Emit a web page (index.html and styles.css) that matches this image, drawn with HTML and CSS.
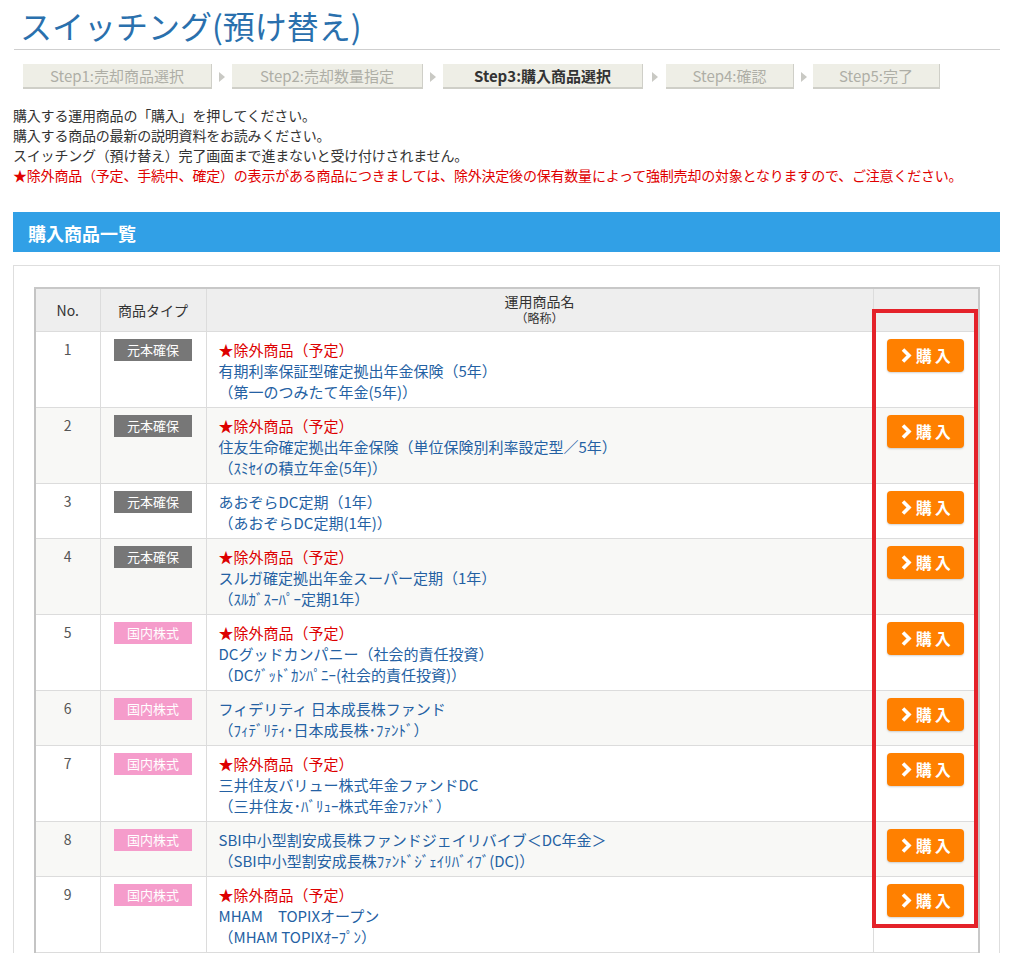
FILE: index.html
```html
<!DOCTYPE html>
<html lang="ja">
<head>
<meta charset="utf-8">
<title>スイッチング(預け替え)</title>
<link rel="stylesheet" href="styles.css">
</head>
<body>
<div class="page">
  <h1 class="title">スイッチング(預け替え)</h1>

  <ol class="steps">
    <li class="step s1">Step1:売却商品選択</li>
    <li class="sep"><svg width="6" height="10" viewBox="0 0 6 10"><path d="M0 0 L6 5 L0 10 Z" fill="#c9c9c4"/></svg></li>
    <li class="step s2">Step2:売却数量指定</li>
    <li class="sep"><svg width="6" height="10" viewBox="0 0 6 10"><path d="M0 0 L6 5 L0 10 Z" fill="#c9c9c4"/></svg></li>
    <li class="step s3 active">Step3:購入商品選択</li>
    <li class="sep"><svg width="6" height="10" viewBox="0 0 6 10"><path d="M0 0 L6 5 L0 10 Z" fill="#c9c9c4"/></svg></li>
    <li class="step s4">Step4:確認</li>
    <li class="sep"><svg width="6" height="10" viewBox="0 0 6 10"><path d="M0 0 L6 5 L0 10 Z" fill="#c9c9c4"/></svg></li>
    <li class="step s5">Step5:完了</li>
  </ol>

  <div class="notice">
    <p>購入する運用商品の「購入」を押してください。</p>
    <p>購入する商品の最新の説明資料をお読みください。</p>
    <p>スイッチング（預け替え）完了画面まで進まないと受け付けされません。</p>
    <p class="warn">★除外商品（予定、手続中、確定）の表示がある商品につきましては、除外決定後の保有数量によって強制売却の対象となりますので、ご注意ください。</p>
  </div>

  <h2 class="section-bar">購入商品一覧</h2>

  <div class="panel">
    <div class="table-wrap">
      <table class="products">
        <colgroup>
          <col class="c-no"><col class="c-type"><col class="c-name"><col class="c-btn">
        </colgroup>
        <thead>
          <tr>
            <th>No.</th>
            <th>商品タイプ</th>
            <th class="h-name"><span class="h1">運用商品名</span><span class="h2">（略称）</span></th>
            <th></th>
          </tr>
        </thead>
        <tbody>
          <tr>
            <td class="no">1</td>
            <td class="type"><span class="badge gray">元本確保</span></td>
            <td class="name"><span class="ex">★除外商品（予定）</span><br>有期利率保証型確定拠出年金保険（5年）<br>（第一のつみたて年金(5年)）</td>
            <td class="btn-cell"><a class="buy" href="#"><svg width="11" height="15" viewBox="0 0 11 15"><path d="M2 1.5 L8 7.5 L2 13.5" fill="none" stroke="#fff" stroke-width="3.6"/></svg><span>購入</span></a></td>
          </tr>
          <tr>
            <td class="no">2</td>
            <td class="type"><span class="badge gray">元本確保</span></td>
            <td class="name"><span class="ex">★除外商品（予定）</span><br>住友生命確定拠出年金保険（単位保険別利率設定型／5年）<br>（ｽﾐｾｲの積立年金(5年)）</td>
            <td class="btn-cell"><a class="buy" href="#"><svg width="11" height="15" viewBox="0 0 11 15"><path d="M2 1.5 L8 7.5 L2 13.5" fill="none" stroke="#fff" stroke-width="3.6"/></svg><span>購入</span></a></td>
          </tr>
          <tr>
            <td class="no">3</td>
            <td class="type"><span class="badge gray">元本確保</span></td>
            <td class="name">あおぞらDC定期（1年）<br>（あおぞらDC定期(1年)）</td>
            <td class="btn-cell"><a class="buy" href="#"><svg width="11" height="15" viewBox="0 0 11 15"><path d="M2 1.5 L8 7.5 L2 13.5" fill="none" stroke="#fff" stroke-width="3.6"/></svg><span>購入</span></a></td>
          </tr>
          <tr>
            <td class="no">4</td>
            <td class="type"><span class="badge gray">元本確保</span></td>
            <td class="name"><span class="ex">★除外商品（予定）</span><br>スルガ確定拠出年金スーパー定期（1年）<br>（ｽﾙｶﾞｽｰﾊﾟｰ定期1年）</td>
            <td class="btn-cell"><a class="buy" href="#"><svg width="11" height="15" viewBox="0 0 11 15"><path d="M2 1.5 L8 7.5 L2 13.5" fill="none" stroke="#fff" stroke-width="3.6"/></svg><span>購入</span></a></td>
          </tr>
          <tr>
            <td class="no">5</td>
            <td class="type"><span class="badge pink">国内株式</span></td>
            <td class="name"><span class="ex">★除外商品（予定）</span><br>DCグッドカンパニー（社会的責任投資）<br>（DCｸﾞｯﾄﾞｶﾝﾊﾟﾆｰ(社会的責任投資)）</td>
            <td class="btn-cell"><a class="buy" href="#"><svg width="11" height="15" viewBox="0 0 11 15"><path d="M2 1.5 L8 7.5 L2 13.5" fill="none" stroke="#fff" stroke-width="3.6"/></svg><span>購入</span></a></td>
          </tr>
          <tr>
            <td class="no">6</td>
            <td class="type"><span class="badge pink">国内株式</span></td>
            <td class="name">フィデリティ 日本成長株ファンド<br>（ﾌｨﾃﾞﾘﾃｨ･日本成長株･ﾌｧﾝﾄﾞ）</td>
            <td class="btn-cell"><a class="buy" href="#"><svg width="11" height="15" viewBox="0 0 11 15"><path d="M2 1.5 L8 7.5 L2 13.5" fill="none" stroke="#fff" stroke-width="3.6"/></svg><span>購入</span></a></td>
          </tr>
          <tr>
            <td class="no">7</td>
            <td class="type"><span class="badge pink">国内株式</span></td>
            <td class="name"><span class="ex">★除外商品（予定）</span><br>三井住友バリュー株式年金ファンドDC<br>（三井住友･ﾊﾞﾘｭｰ株式年金ﾌｧﾝﾄﾞ）</td>
            <td class="btn-cell"><a class="buy" href="#"><svg width="11" height="15" viewBox="0 0 11 15"><path d="M2 1.5 L8 7.5 L2 13.5" fill="none" stroke="#fff" stroke-width="3.6"/></svg><span>購入</span></a></td>
          </tr>
          <tr>
            <td class="no">8</td>
            <td class="type"><span class="badge pink">国内株式</span></td>
            <td class="name">SBI中小型割安成長株ファンドジェイリバイブ＜DC年金＞<br>（SBI中小型割安成長株ﾌｧﾝﾄﾞｼﾞｪｲﾘﾊﾞｲﾌﾞ(DC)）</td>
            <td class="btn-cell"><a class="buy" href="#"><svg width="11" height="15" viewBox="0 0 11 15"><path d="M2 1.5 L8 7.5 L2 13.5" fill="none" stroke="#fff" stroke-width="3.6"/></svg><span>購入</span></a></td>
          </tr>
          <tr>
            <td class="no">9</td>
            <td class="type"><span class="badge pink">国内株式</span></td>
            <td class="name"><span class="ex">★除外商品（予定）</span><br>MHAM　TOPIXオープン<br>（MHAM TOPIXｵｰﾌﾟﾝ）</td>
            <td class="btn-cell"><a class="buy" href="#"><svg width="11" height="15" viewBox="0 0 11 15"><path d="M2 1.5 L8 7.5 L2 13.5" fill="none" stroke="#fff" stroke-width="3.6"/></svg><span>購入</span></a></td>
          </tr>
        </tbody>
      </table>
      <div class="highlight"></div>
    </div>
  </div>
</div>
</body>
</html>
```

FILE: styles.css
```css
html, body {
  margin: 0;
  padding: 0;
  overflow: hidden;
  background: #fff;
}
body {
  font-family: "Noto Sans CJK JP", "Noto Sans", sans-serif;
  color: #333;
}
.page {
  width: 987px;
  padding-left: 13px;
}
.title {
  margin: 0;
  padding: 5px 0 4px 6px;
  margin-left: 1px;
  font-size: 32px;
  line-height: 40px;
  font-weight: normal;
  color: #2a70ad;
  border-bottom: 1px solid #cfcfcf;
}
.steps {
  list-style: none;
  margin: 14px 0 0 10px;
  padding: 0;
  display: flex;
  align-items: center;
  height: 25px;
}
.step {
  height: 25px;
  box-sizing: border-box;
  background: #eeeee6;
  border-right: 1px solid #cfcfc8;
  border-bottom: 2px solid #cfcfc8;
  color: #aeaea6;
  font-size: 15px;
  line-height: 23px;
  text-align: center;
}
.step.active {
  color: #333;
  font-weight: bold;
}
.s1 { width: 189px; }
.s2 { width: 191px; }
.s3 { width: 200px; }
.s4 { width: 128px; }
.s5 { width: 127px; }
.sep {
  width: 20px;
  display: flex;
  justify-content: center;
  align-items: center;
}
.sep:nth-child(6) { width: 23px; }
.sep:nth-child(8) { width: 19px; }
.notice {
  margin-top: 16px;
  font-size: 14px;
  line-height: 20px;
  letter-spacing: -0.2px;
  color: #333;
}
.notice p { margin: 0; white-space: nowrap; }
.notice .warn { color: #e00000; }
.section-bar {
  margin: 27px 0 0 0;
  height: 40px;
  box-sizing: border-box;
  background: #31a0e6;
  color: #fff;
  font-size: 18px;
  font-weight: bold;
  padding: 2px 0 0 15px;
  line-height: 38px;
}
.panel {
  margin-top: 13px;
  border: 1px solid #dedede;
  padding: 21px 21px 21px 20px;
}
.table-wrap {
  position: relative;
}
.products {
  width: 944px;
  border-collapse: collapse;
  table-layout: fixed;
  border-left: 2px solid #c4c4c4;
  border-top: 2px solid #c8c8c8;
  border-right: 2px solid #c8c8c8;
}
.c-no { width: 65px; }
.c-type { width: 106px; }
.c-name { width: 667px; }
.c-btn { width: 106px; }
.products th {
  background: #eeeeee;
  height: 42px;
  padding: 0;
  font-size: 14px;
  font-weight: normal;
  line-height: 16px;
  color: #333;
  border: 1px solid #dcdcdc;
  border-top: none;
  vertical-align: middle;
}
.products th.h-name .h1,
.products th.h-name .h2 {
  display: block;
  line-height: 18px;
  height: 18px;
}
.products th.h-name .h1 { font-size: 14px; margin-top: -2px; }
.products th.h-name .h2 { font-size: 12px; margin-top: -1px; }
.products td {
  border: 1px solid #dcdcdc;
  vertical-align: top;
  padding: 0;
}
.products tbody tr:nth-child(even) td { background: #f8f8f6; }
.products td.no {
  text-align: center;
  font-size: 14px;
  line-height: 21px;
  padding-top: 7px;
  color: #555;
}
.products td.type {
  padding-top: 7px;
}
.badge {
  display: block;
  width: 78px;
  height: 22px;
  margin: 0 auto;
  font-size: 13px;
  line-height: 22px;
  text-align: center;
  color: #fff;
}
.badge.gray { background: #777777; }
.badge.pink { background: #f59ccb; }
.products td.name {
  padding: 7px 10px 5px 12px;
  font-size: 15px;
  line-height: 21px;
  color: #2461a3;
  white-space: nowrap;
}
.name .ex { color: #dd0000; }
.products td.btn-cell {
  padding-top: 7px;
  text-align: center;
}
.buy {
  display: inline-flex;
  align-items: center;
  justify-content: center;
  gap: 4px;
  width: 77px;
  height: 33px;
  box-sizing: border-box;
  border-radius: 4px;
  background: #ff8000;
  box-shadow: 0 1px 2px rgba(0,0,0,0.18);
  color: #fff;
  text-decoration: none;
  font-size: 16px;
  font-weight: bold;
  letter-spacing: 3px;
  padding-left: 3px;
}
.buy span { line-height: 33px; }
.highlight {
  position: absolute;
  left: 838px;
  top: 22px;
  width: 106px;
  height: 619px;
  box-sizing: border-box;
  border: 4px solid #e4222a;
  pointer-events: none;
}
```
